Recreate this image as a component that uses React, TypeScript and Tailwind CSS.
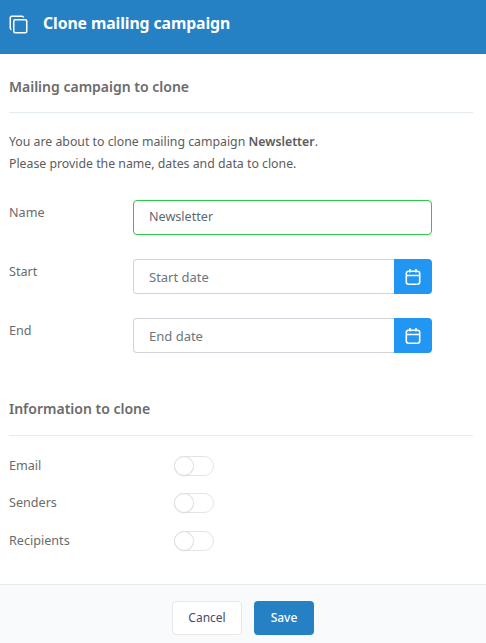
import React from "react";

function Cal() {
  return (
    <svg width="16" height="18" viewBox="0 0 16 18" fill="none" stroke="white" strokeWidth="1.6">
      <rect x="1.3" y="3.3" width="13.4" height="13" rx="2.2" />
      <path d="M1.3 7.5h13.4M5 1v3.5M11 1v3.5" />
    </svg>
  );
}

function Toggle() {
  return (
    <div className="w-[40px] h-[20px] rounded-full border border-[#e4e4e4] bg-white relative">
      <div className="absolute left-[0px] top-[0px] w-[18px] h-[18px] rounded-full bg-white shadow-[0_0_0_1px_#e0e0e0,0_1px_2px_rgba(0,0,0,0.1)]" />
    </div>
  );
}

function DateField({ placeholder, label, mb }: { placeholder: string; label: string; mb: string }) {
  return (
    <div className={`flex ${mb}`}>
      <div className="w-[124px] pt-[4px] text-[12.6px] leading-[18px] text-[#6b6b6b]">{label}</div>
      <div className="w-[299px] h-[35px] flex">
        <div className="flex-1 h-full border border-[#ced4da] border-r-0 rounded-l-[4px] pl-[15px] pt-[2px] flex items-center text-[13px] text-[#6c757d]">
          {placeholder}
        </div>
        <div className="w-[38px] h-full bg-[#2196f3] rounded-r-[4px] flex items-center justify-center">
          <Cal />
        </div>
      </div>
    </div>
  );
}

function ToggleRow({ label, mb }: { label: string; mb: string }) {
  return (
    <div className={`flex items-center h-[20px] ${mb}`}>
      <div className="w-[165px] text-[12.6px] text-[#6b6b6b]">{label}</div>
      <Toggle />
    </div>
  );
}

export default function App() {
  return (
    <div className="w-[486px] h-[643px] bg-white flex flex-col overflow-hidden font-['Noto_Sans',sans-serif]">
      <div className="h-[54px] bg-[#2680c4] flex items-center pl-[9px] gap-[15px] text-white pb-[6px]">
        <svg width="19" height="19" viewBox="0 0 19 19" fill="none" stroke="white" strokeWidth="1.5">
          <rect x="4.75" y="4.75" width="13" height="13" rx="1.5" />
          <path d="M2.5 14.5a1.5 1.5 0 0 1-1.25-1.5V2.75a1.5 1.5 0 0 1 1.5-1.5H13a1.5 1.5 0 0 1 1.5 1.25" />
        </svg>
        <div className="text-[15.8px] font-bold tracking-[-0.1px]">Clone mailing campaign</div>
      </div>
      <div className="flex-1 px-[9px]">
        <div className="mt-[22px] h-[22px] text-[14px] leading-[22px] font-semibold text-[#6b6b6b]">Mailing campaign to clone</div>
        <div className="mt-[14px] w-[464px] h-px bg-[#e4ebf0]" />
        <div className="mt-[18px] text-[12.3px] leading-[22px] text-[#5c5c5c]">
          <div>You are about to clone mailing campaign <b className="font-semibold">Newsletter</b>.</div>
          <div>Please provide the name, dates and data to clone.</div>
        </div>
        <div className="mt-[25px] flex mb-[24px]">
          <div className="w-[124px] pt-[4px] text-[12.6px] leading-[18px] text-[#6b6b6b]">Name</div>
          <div className="w-[299px] h-[35px] border border-[#2bc94a] rounded-[4px] pl-[15px] flex items-center text-[12.6px] text-[#5f6770]">Newsletter</div>
        </div>
        <DateField placeholder="Start date" label="Start" mb="mb-[24px]" />
        <DateField placeholder="End date" label="End" mb="" />
        <div className="mt-[45px] h-[22px] text-[14px] leading-[22px] font-semibold text-[#6b6b6b]">Information to clone</div>
        <div className="mt-[15px] w-[464px] h-px bg-[#e4ebf0]" />
        <div className="mt-[20px]">
          <ToggleRow label="Email" mb="mb-[17px]" />
          <ToggleRow label="Senders" mb="mb-[18px]" />
          <ToggleRow label="Recipients" mb="" />
        </div>
      </div>
      <div className="h-[59px] border-t border-[#e6e8eb] bg-[#f9fafc] flex justify-center gap-[12px] pt-[16px]">
        <div className="w-[70px] h-[34px] bg-white border border-[#e8e8e8] rounded-[4px] flex items-center justify-center text-[12px] text-[#4a4a6a]">Cancel</div>
        <div className="w-[60px] h-[34px] bg-[#2680c4] rounded-[4px] flex items-center justify-center text-[12px] font-medium text-white">Save</div>
      </div>
    </div>
  );
}
